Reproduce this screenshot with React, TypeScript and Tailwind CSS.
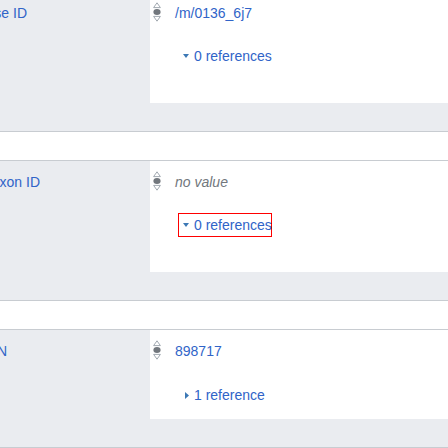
import React from "react";

const Rank = () => (
  <svg width="8" height="20" viewBox="0 0 8 20" className="block shrink-0">
    <path d="M4 0.8 L7.4 5.6 L0.6 5.6 Z" fill="#ffffff" stroke="#a2a9b1" strokeWidth="1" />
    <ellipse cx="4" cy="10" rx="3.6" ry="3" fill="#72777d" />
    <path d="M0.6 14.4 L7.4 14.4 L4 19.2 Z" fill="#ffffff" stroke="#a2a9b1" strokeWidth="1" />
  </svg>
);

const Down = () => (
  <svg width="6" height="4" viewBox="0 0 6 4" className="block shrink-0">
    <path d="M0 0 L6 0 L3 4 Z" fill="#3c78b5" />
  </svg>
);

const Right = () => (
  <svg width="4" height="7" viewBox="0 0 4 7" className="block shrink-0">
    <path d="M0 0 L4 3.5 L0 7 Z" fill="#3c78b5" />
  </svg>
);

type Props = {
  label: string;
  labelW: string;
  value: React.ReactNode;
  refs: React.ReactNode;
  panelH: string;
  refsMt: string;
  boxed?: boolean;
  first?: boolean;
};

function Section({ label, labelW, value, refs, panelH, refsMt, boxed, first }: Props) {
  return (
    <div className={`bg-[#eaecf0] ${first ? "-mt-[8px]" : "border-t border-[#c8ccd1]"}`}>
      <div className="flex">
        <div className="w-[150px] shrink-0 pt-[11px]">
          <div className={`flex justify-end overflow-hidden whitespace-nowrap text-[14px] leading-[20px] text-[#3064c8] ${labelW}`}>
            <span className="shrink-0">{label}</span>
          </div>
        </div>
        <div className={`flex-1 bg-white ${panelH}`}>
          <div className="flex items-start pt-[10px] pl-[3px]">
            <Rank />
            <div className="ml-[14px] mt-[1px] text-[14px] leading-[20px] whitespace-nowrap">{value}</div>
          </div>
          <div className={`ml-[28px] ${refsMt}`}>
            <div
              className={`w-[94px] h-[24px] border ${boxed ? "border-[#ff0000]" : "border-transparent"} flex items-center whitespace-nowrap text-[14px] leading-[20px] text-[#3064c8]`}
            >
              {refs}
            </div>
          </div>
        </div>
      </div>
      <div className="h-[29px] border-b border-[#c8ccd1]" />
    </div>
  );
}

export default function App() {
  return (
    <div
      className="w-[448px] h-[448px] overflow-hidden bg-[#eaecf0]"
      style={{ fontFamily: '"Liberation Sans", Arial, sans-serif' }}
    >
      <Section
        first
        label="Freebase ID"
        labelW="w-[27px]"
        panelH="h-[111px]"
        refsMt="mt-[21px]"
        value={<span className="text-[#3064c8]">/m/0136_6j7</span>}
        refs={
          <>
            <span className="ml-[4px]"><Down /></span>
            <span className="ml-[5px]">0 references</span>
          </>
        }
      />
      <div className="h-[28px] bg-white" />
      <Section
        label="iNaturalist taxon ID"
        labelW="w-[40px]"
        panelH="h-[111px]"
        refsMt="mt-[21px]"
        boxed
        value={<span className="italic text-[#72777d]">no value</span>}
        refs={
          <>
            <span className="ml-[4px]"><Down /></span>
            <span className="ml-[5px]">0 references</span>
          </>
        }
      />
      <div className="h-[28px] bg-white" />
      <Section
        label="ITIS TSN"
        labelW="w-[7px]"
        panelH="h-[89px]"
        refsMt="mt-[22px]"
        value={<span className="text-[#3064c8]">898717</span>}
        refs={
          <>
            <span className="ml-[6px]"><Right /></span>
            <span className="ml-[5px]">1 reference</span>
          </>
        }
      />
    </div>
  );
}
